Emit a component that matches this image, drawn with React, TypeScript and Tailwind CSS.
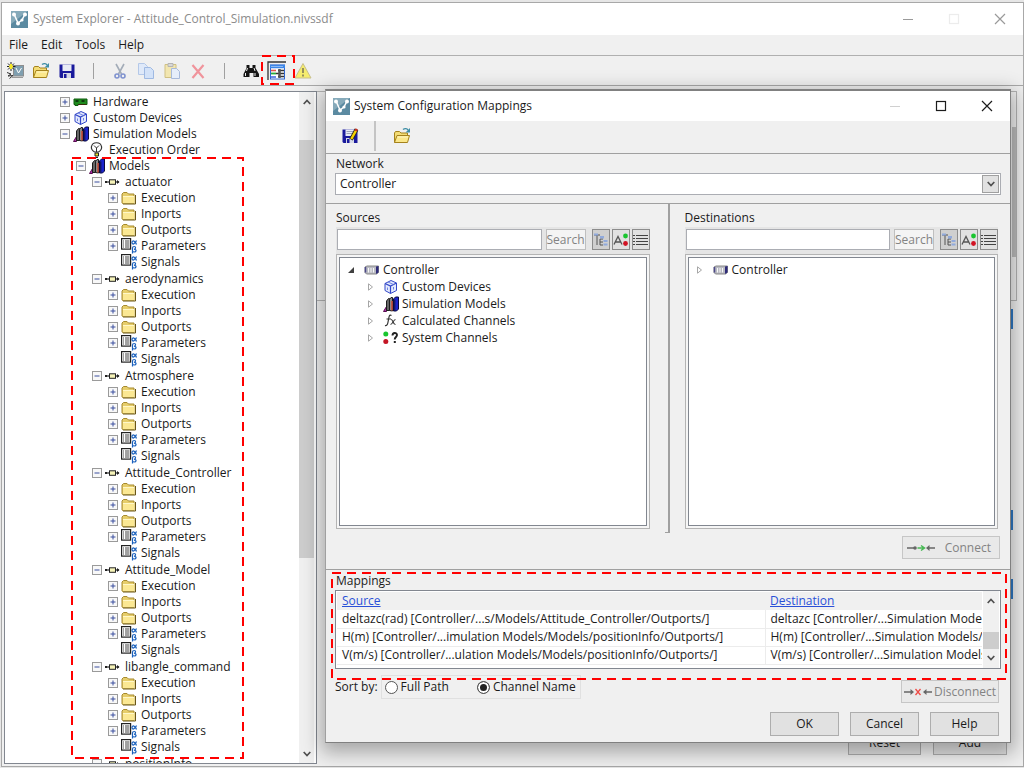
import React, { useState } from "react";
import clsx from "clsx";

type IconName =
  | "board"
  | "cube"
  | "books"
  | "bulb"
  | "block"
  | "folder"
  | "params"
  | "controller"
  | "fx"
  | "system";

type TreeItem = {
  label: string;
  icon: IconName;
  level: number;
  state?: "open" | "closed";
};

const topItems: TreeItem[] = [
  { label: "Hardware", icon: "board", level: 0, state: "closed" },
  { label: "Custom Devices", icon: "cube", level: 0, state: "closed" },
  { label: "Simulation Models", icon: "books", level: 0, state: "open" },
  { label: "Execution Order", icon: "bulb", level: 1 },
  { label: "Models", icon: "books", level: 1, state: "open" },
];

const models = [
  "actuator",
  "aerodynamics",
  "Atmosphere",
  "Attitude_Controller",
  "Attitude_Model",
  "libangle_command",
];

const modelChildren: TreeItem[] = [
  { label: "Execution", icon: "folder", level: 3, state: "closed" },
  { label: "Inports", icon: "folder", level: 3, state: "closed" },
  { label: "Outports", icon: "folder", level: 3, state: "closed" },
  { label: "Parameters", icon: "params", level: 3, state: "closed" },
  { label: "Signals", icon: "params", level: 3 },
];

const sourceItems: { label: string; icon: IconName }[] = [
  { label: "Custom Devices", icon: "cube" },
  { label: "Simulation Models", icon: "books" },
  { label: "Calculated Channels", icon: "fx" },
  { label: "System Channels", icon: "system" },
];

const mappings = [
  {
    source: "deltazc(rad) [Controller/...s/Models/Attitude_Controller/Outports/]",
    destination: "deltazc [Controller/...Simulation Models",
  },
  {
    source: "H(m) [Controller/...imulation Models/Models/positionInfo/Outports/]",
    destination: "H(m) [Controller/...Simulation Models/M",
  },
  {
    source: "V(m/s) [Controller/...ulation Models/Models/positionInfo/Outports/]",
    destination: "V(m/s) [Controller/...Simulation Models",
  },
];

const indent = ["pl-[55px]", "pl-[71px]", "pl-[87px]", "pl-[103px]"];

const AppLogo = () => (
  <svg viewBox="0 0 17 17" className="h-[17px] w-[17px] shrink-0">
    <rect width="17" height="17" fill="#5b8aa1" />
    <path d="M0 0h17L0 13z" fill="#86aaba" />
    <path d="M3 3l4 9M7 12l4-3 3-6" stroke="#fff" strokeWidth="1.5" fill="none" />
    <circle cx="3" cy="3.5" r="2" fill="#fff" />
    <circle cx="7" cy="12.5" r="2" fill="#fff" />
    <circle cx="11" cy="9" r="1.6" fill="#fff" />
    <circle cx="14" cy="3.5" r="2" fill="#fff" />
  </svg>
);

const OpenFolder = () => (
  <svg viewBox="0 0 18 18" className="h-[18px] w-[18px]">
    <path d="M1.5 15.500V6l1-1.500h4L8 6h6.500v3" fill="#f3dc75" stroke="#a5821c" />
    <path d="M1.500 15.500L4 8.500h12.500l-2 7z" fill="#fbe78a" stroke="#a5821c" strokeLinejoin="round" />
    <path d="M4.500 10h10.500" stroke="#fff6c4" />
    <path d="M10 2.500c2-1.500 4-1 5 .5" fill="none" stroke="#3f8ea6" strokeWidth="1.400" />
    <path d="M17 1v4.500h-4.500z" fill="#3f8ea6" />
  </svg>
);

const Floppy = ({ pencil = false }: { pencil?: boolean }) => (
  <svg viewBox="0 0 18 18" className="h-[18px] w-[18px]">
    <path d="M1.500 2.500h15v13.500h-14l-1-1z" fill="#1a1a9c" />
    <rect x="4.500" y="2.500" width="9" height="6.500" fill="#e9ecf5" />
    {pencil && <path d="M5.500 4.500h7M5.500 6.500h7" stroke="#9da3b8" />}
    <rect x="5" y="11" width="8" height="5" fill="#d5d8e6" />
    <rect x="6" y="12" width="2.500" height="4" fill="#1a1a9c" />
    {pencil && (
      <>
        <path d="M10 12.500l5.500-10" stroke="#222" strokeWidth="4" />
        <path d="M10.300 12l5-9" stroke="#f6d300" strokeWidth="2.500" />
        <path d="M14.600 3.800l1.200-2" stroke="#c8321e" strokeWidth="2.500" />
      </>
    )}
  </svg>
);

const TreeIcon = ({ name }: { name: IconName }) => {
  switch (name) {
    case "board":
      return (
        <svg viewBox="0 0 16 16" className="h-4 w-4 shrink-0">
          <path d="M1 5h13v5.500H5v1H2v-1H1z" fill="#1e8a1e" stroke="#0f5a0f" />
          <path d="M2.500 6h3v2h-3zM8.500 6h3v2h-3z" fill="#0d3a0d" />
          <path d="M5 10.500h8" stroke="#3a2c0c" />
        </svg>
      );
    case "cube":
      return (
        <svg viewBox="0 0 16 16" className="h-4 w-4 shrink-0">
          <path d="M2 4.500L8 1.500l5.500 2.500v7.500L7.500 14.500 2 11.500z" fill="#e4eafc" stroke="#3247c8" />
          <path d="M2 4.500l5.500 2.500 6-3M7.500 7v7.500" stroke="#3247c8" strokeWidth="1.200" fill="none" />
          <path d="M5 3l5.500 2.500M4.500 8.500v2.500M10.500 8v2.500" stroke="#6f84e6" />
        </svg>
      );
    case "books":
      return (
        <svg viewBox="0 0 16 16" className="h-4 w-4 shrink-0">
          <path d="M.5 15.500l3-5v5z" fill="#b32bb0" stroke="#57104f" />
          <path d="M3.500 14.500V5L5.500 2.500h1v12z" fill="#666" stroke="#1c1c1c" />
          <path d="M6.500 14.500V3.500L8 1.500h1.500V15z" fill="#8a8a8a" stroke="#1c1c1c" />
          <path d="M9 5v9.500" stroke="#c9503c" strokeWidth="1.600" />
          <path d="M10.500 15V3L12.500 1h3v12L13.500 15z" fill="#1a22cc" stroke="#0a0a40" />
          <path d="M11.800 3.500v11" stroke="#111" strokeWidth=".8" />
        </svg>
      );
    case "bulb":
      return (
        <svg viewBox="0 0 16 16" className="h-4 w-4 shrink-0">
          <path d="M5.500 10C3 8.500 2 6.500 2.500 4.500 3.500-.5 11.500-.5 12.500 4.500c.5 2-.5 4-3 5.500z" fill="#fff" stroke="#333" strokeWidth="1.200" />
          <path d="M5 3.500l2.500 2.500L10 3.500M7.500 6v4" stroke="#333" fill="none" />
          <path d="M6 11h3.500v3H6z" fill="#e8e22a" stroke="#222" />
          <path d="M6.500 15.500h2.500" stroke="#222" />
        </svg>
      );
    case "block":
      return (
        <svg viewBox="0 0 16 16" className="h-4 w-4 shrink-0">
          <path d="M1 8h13" stroke="#222" strokeWidth="1.200" />
          <path d="M12 6l2.500 2L12 10zM0 7h2v2H0z" fill="#222" />
          <rect x="4.500" y="5.800" width="6" height="4.500" fill="#f6f3b8" stroke="#222" />
        </svg>
      );
    case "folder":
      return (
        <svg viewBox="0 0 16 16" className="h-4 w-4 shrink-0">
          <path d="M1 13V4l1.500-1.500h3.500L7.500 4H13v9.500H1.500z" fill="#e6cd6a" stroke="#a68a2e" />
          <path d="M2 6h11.500v7.500H2z" fill="#fbe893" />
          <path d="M2 6.500h11" stroke="#fff7c8" />
          <path d="M14.500 5v9H2" stroke="#6b5716" fill="none" />
        </svg>
      );
    case "params":
      return (
        <svg viewBox="0 0 16 16" className="h-4 w-4 shrink-0 overflow-visible">
          <rect x=".6" y=".6" width="9" height="10.500" fill="#fff" stroke="#222" strokeWidth="1.200" />
          <path d="M2 3h1M2 5h1M2 7h1M2 9h1M4 3h4.500M4 5h4.500M4 7h4.500M4 9h4.500" stroke="#444" />
          <path d="M15.500 2.500c-1.500 4-4.500 4.500-4.500 2s3.500-2 4.500 2" fill="none" stroke="#1c62bd" strokeWidth="1.200" />
          <path d="M11.500 15.500V10c0-2 3.500-2 3 0 0 1-1 1.200-1.500 1.200 3 0 2.500 3 0 2.800l-1.200-.5" fill="none" stroke="#1c62bd" strokeWidth="1.200" />
        </svg>
      );
    case "controller":
      return (
        <svg viewBox="0 0 16 16" className="h-4 w-4 shrink-0">
          <path d="M1 5l2-1h11.500v6.500l-2 1.500H2.500L1 10.500z" fill="#b9bac2" stroke="#888" />
          <path d="M12 4.500l2.500-.5v6.500L12 12z" fill="#2e2b78" />
          <path d="M1.500 5v5.500" stroke="#4c498a" strokeWidth="1.500" />
          <path d="M4.500 6v4.500M7 6v4.500M9.500 6v4.500" stroke="#f7f7f7" />
        </svg>
      );
    case "fx":
      return (
        <svg viewBox="0 0 16 16" className="h-4 w-4 shrink-0">
          <path d="M8.500 2.500C6.500 1 6 3.500 5.500 6.500S4.500 13.500 2 12.500M3.500 6h4.500" fill="none" stroke="#333" strokeWidth="1.200" />
          <path d="M8 6.500c2-.5 2 5.500 4.500 5M12.500 6.500c-2 0-3 5-5 5" fill="none" stroke="#333" strokeWidth="1.100" />
        </svg>
      );
    case "system":
      return (
        <svg viewBox="0 0 16 16" className="h-4 w-4 shrink-0">
          <circle cx="2.800" cy="4" r="2.500" fill="#19c52e" />
          <circle cx="2.800" cy="11.500" r="2.500" fill="#c41525" />
          <path d="M9.500 5.500c0-3.200 4.500-3.200 4.500-.5 0 2-2.300 2-2.300 4.500" fill="none" stroke="#222" strokeWidth="1.900" />
          <rect x="10.800" y="11" width="2" height="2" fill="#222" />
        </svg>
      );
  }
};

const Chevron = ({ up = false }: { up?: boolean }) => (
  <svg viewBox="0 0 8 6" className="h-[6px] w-2">
    <path d={up ? "M.7 5L4 1.500 7.300 5" : "M.7 1L4 4.500 7.300 1"} fill="none" stroke="#505050" strokeWidth="1.700" />
  </svg>
);

// red dashed callout drawn over whatever it wraps
const DashedFrame = ({ className }: { className: string }) => (
  <div className={clsx("pointer-events-none absolute z-20", className)}>
    <svg className="block h-full w-full overflow-visible">
      <rect width="100%" height="100%" fill="none" stroke="#ff0000" strokeWidth="2" strokeDasharray="9 6" />
    </svg>
  </div>
);

const TreeRow = ({ label, icon, level, state }: TreeItem) => (
  <li className={clsx("flex h-4 items-center whitespace-nowrap", indent[level])}>
    {state ? (
      <button
        type="button"
        aria-label={`Toggle ${label}`}
        className="mr-[3px] h-[10px] w-[10px] shrink-0 border border-[#9a9a9a] bg-[#f8f8f8]"
      >
        <svg viewBox="0 0 8 8" className="h-2 w-2">
          <path d={state === "open" ? "M1.500 4h5" : "M1.500 4h5M4 1.500v5"} stroke="#3a4f9e" />
        </svg>
      </button>
    ) : (
      <span className="mr-[3px] w-[10px] shrink-0" />
    )}
    <TreeIcon name={icon} />
    <span className="ml-1">{label}</span>
  </li>
);

const toolButton = "flex h-6 w-[26px] items-center justify-center";

const ToolSeparator = () => (
  <span className="flex w-[27px] justify-center">
    <span className="h-4 w-px bg-[#a0a0a0]" />
  </span>
);

const MainToolbar = () => (
  <div className="relative flex h-[30px] items-center border-t border-[#b0b0b0] bg-[#f0f0f0] pt-px">
    <button type="button" aria-label="New" className={toolButton}>
      <svg viewBox="0 0 18 18" className="h-[18px] w-[18px]">
        <rect x="7.500" y="3.500" width="10" height="10.500" fill="#7f9fb0" stroke="#8d8d8d" />
        <path d="M10 6l2.500 5 3-5" stroke="#fff" fill="none" />
        <path d="M5 0v9M1 4.500h8.500M2 1.500l6 6M8 1.500l-6 6" stroke="#222" />
        <path d="M5 2v5M3 4.500h4" stroke="#f6e926" strokeWidth="2" />
        <path d="M1 10.500l4 1.500-3 2 5-.5-3.500 3" stroke="#333" fill="none" />
        <path d="M6 15.500h11" stroke="#999" />
      </svg>
    </button>
    <button type="button" aria-label="Open" className={toolButton}>
      <OpenFolder />
    </button>
    <button type="button" aria-label="Save" className={toolButton}>
      <Floppy />
    </button>
    <ToolSeparator />
    <button type="button" aria-label="Cut" className={toolButton}>
      <svg viewBox="0 0 18 18" className="h-[18px] w-[18px]">
        <path d="M5 2l5.500 10M13 2L7.500 12" stroke="#a3acb8" strokeWidth="1.600" />
        <circle cx="6" cy="14" r="2" fill="none" stroke="#8093cf" strokeWidth="1.600" />
        <circle cx="12" cy="14" r="2" fill="none" stroke="#8093cf" strokeWidth="1.600" />
      </svg>
    </button>
    <button type="button" aria-label="Copy" className={toolButton}>
      <svg viewBox="0 0 18 18" className="h-[18px] w-[18px]">
        <path d="M1.500 1.500h6l3 3v8h-9z" fill="#dfe9f9" stroke="#b4c8e8" />
        <path d="M7.500 5.500h6l3 3v8h-9z" fill="#d3e2f8" stroke="#9fb9e2" />
      </svg>
    </button>
    <button type="button" aria-label="Paste" className={toolButton}>
      <svg viewBox="0 0 18 18" className="h-[18px] w-[18px]">
        <path d="M2 2.500h11v13H2z" fill="#f2e6b0" stroke="#d0c083" />
        <path d="M5 1.500h5v3H5z" fill="#d9d9d9" stroke="#b4b4b4" />
        <path d="M8.500 6.500h5l3 3v7h-8z" fill="#e6eefa" stroke="#a8bada" />
      </svg>
    </button>
    <button type="button" aria-label="Delete" className={toolButton}>
      <svg viewBox="0 0 18 18" className="h-[18px] w-[18px]">
        <path d="M3.500 3l11 13M14.500 3L3.500 16" stroke="#f0949c" strokeWidth="2.200" />
      </svg>
    </button>
    <ToolSeparator />
    <button type="button" aria-label="Find" className={toolButton}>
      <svg viewBox="0 0 18 18" className="h-[18px] w-[18px]">
        <path d="M4.500 3h3v3h3V3h3v3l3.500 6v3h-5.500v-4h-4v4H1.500v-3L4.500 6z" fill="#161616" />
        <path d="M3.500 11v3M5.500 6l-1 3M13 11v3M12 6l1 3" stroke="#eee" />
      </svg>
    </button>
    <button type="button" aria-label="Configure mappings" className={toolButton}>
      <svg viewBox="0 0 20 20" className="h-5 w-5">
        <path d="M1 19V1h18" stroke="#333" fill="none" strokeWidth="1.300" />
        <rect x="3.500" y="4" width="14" height="14" fill="#fff" stroke="#2f66d0" />
        <path d="M3 5.500h15" stroke="#3c86e8" strokeWidth="3.500" />
        <path d="M4.500 5.500h12" stroke="#dceafc" strokeDasharray="1 1" />
        <path d="M4 9.500h5" stroke="#e0554b" strokeWidth="1.600" />
        <path d="M4 12.500h5" stroke="#2aa83c" strokeWidth="1.800" />
        <path d="M4 16h5" stroke="#4a6be0" strokeWidth="1.600" />
        <path d="M11 9.500h6M9 12.500h8M11 15.500h6" stroke="#333" strokeWidth="1.300" />
        <path d="M12.500 8v9" stroke="#555" strokeWidth="2.500" />
      </svg>
    </button>
    <button type="button" aria-label="Errors and warnings" className={toolButton}>
      <svg viewBox="0 0 18 18" className="h-[18px] w-[18px]">
        <path d="M9 1.500L17 16H1z" fill="#f5ec6e" stroke="#c8c08c" strokeLinejoin="round" />
        <path d="M9 6v5M9 12.500v2" stroke="#85815c" strokeWidth="1.700" />
      </svg>
    </button>
    <DashedFrame className="left-[260px] top-0 h-[28px] w-[32px]" />
  </div>
);

const WindowButtons = ({ dialog = false }: { dialog?: boolean }) => (
  <div className={clsx("flex", dialog ? "text-[#1c1c1c]" : "text-[#9a9a9a]")}>
    <button type="button" aria-label="Minimize" className="flex h-[30px] w-[46px] items-center justify-center">
      <svg viewBox="0 0 12 12" className={clsx("h-3 w-3", dialog && "text-[#d0d0d0]")}>
        <path d="M1 6.500h10" stroke="currentColor" />
      </svg>
    </button>
    <button type="button" aria-label="Maximize" className="flex h-[30px] w-[46px] items-center justify-center">
      <svg viewBox="0 0 12 12" className={clsx("h-3 w-3", !dialog && "text-[#ececec]")}>
        <rect x="1.500" y="1.500" width="9" height="9" fill="none" stroke="currentColor" strokeWidth="1.200" />
      </svg>
    </button>
    <button type="button" aria-label="Close" className="flex h-[30px] w-[46px] items-center justify-center">
      <svg viewBox="0 0 12 12" className="h-3 w-3">
        <path d="M1 1l10 10M11 1L1 11" stroke="currentColor" strokeWidth="1.200" />
      </svg>
    </button>
  </div>
);

const ExplorerTree = () => (
  <div className="relative flex w-[313px] shrink-0 border border-[#828790] bg-white">
    <ul className="min-w-0 flex-1 overflow-hidden pt-0.5">
      {topItems.map((item) => (
        <TreeRow key={item.label} {...item} />
      ))}
      {models.map((model) => (
        <li key={model}>
          <ul className="pb-px">
            <TreeRow label={model} icon="block" level={2} state="open" />
            {modelChildren.map((item) => (
              <TreeRow key={item.label} {...item} />
            ))}
          </ul>
        </li>
      ))}
      <TreeRow label="positionInfo" icon="block" level={2} state="open" />
    </ul>
    <div className="mr-0.5 flex w-[15px] flex-col items-center bg-[#f0f0f0]">
      <div className="flex h-5 items-center">
        <Chevron up />
      </div>
      <div className="mt-[28px] h-[418px] w-full bg-[#cdcdcd]" />
      <div className="mt-auto flex h-[18px] items-center">
        <Chevron />
      </div>
    </div>
    <DashedFrame className="bottom-[5px] left-[67px] top-[66px] w-[171px]" />
  </div>
);

const Triangle = ({ open = false }: { open?: boolean }) => (
  <svg viewBox="0 0 8 8" className="h-2 w-2 shrink-0">
    {open ? (
      <path d="M7 1v6H1z" fill="#404040" />
    ) : (
      <path d="M1.500.8L5.500 4 1.500 7.200z" fill="#fff" stroke="#a6a6a6" />
    )}
  </svg>
);

const viewButton = "flex h-[21px] w-[18px] items-center justify-center border border-[#8c8c8c]";

type ChannelPaneProps = {
  title: string;
  expanded?: boolean;
};

const ChannelPane = ({ title, expanded = false }: ChannelPaneProps) => {
  const [query, setQuery] = useState("");

  return (
    <section className="flex min-w-0 flex-1 flex-col">
      <label htmlFor={title} className="h-[23px] leading-[28px]">
        {title}
      </label>
      <div className="flex h-[27px] items-start bg-[#e5e5e5] pl-px pt-0.5">
        <input
          id={title}
          type="text"
          value={query}
          onChange={(e) => setQuery(e.target.value)}
          className="h-[21px] min-w-0 flex-1 border border-[#abadb3] bg-white px-1 outline-none"
        />
        <button type="button" disabled className="ml-1 h-[21px] w-10 border border-[#bfbfbf] bg-[#f4f4f4] text-center text-[#838383]">
          Search
        </button>
        <button type="button" aria-label={`${title} tree view`} className={clsx(viewButton, "ml-[6px] bg-[#cfcfcf]")}>
          <svg viewBox="0 0 16 16" className="h-4 w-4">
            <path d="M1 3h6M4 3v10M7 7v6M7 7h3M7 10h3M7 13h3" stroke="#555" />
            <path d="M1 1.500h4v2H1zM7 4h4v2.500H7zM10.500 8h4v2h-4zM10.500 11.500h4v2h-4z" fill="#90a9dc" />
          </svg>
        </button>
        <button type="button" aria-label={`${title} sort by name`} className={clsx(viewButton, "ml-[2px] bg-[#e1e1e1]")}>
          <svg viewBox="0 0 16 16" className="h-4 w-4">
            <path d="M1 12.500L5 4.500l4 8M2.500 10h5" fill="none" stroke="#555" strokeWidth="1.300" />
            <circle cx="12.500" cy="4" r="2.400" fill="#19c52e" />
            <circle cx="12.500" cy="11.500" r="2.400" fill="#d11223" />
          </svg>
        </button>
        <button type="button" aria-label={`${title} list view`} className={clsx(viewButton, "ml-[2px] bg-[#e1e1e1]")}>
          <svg viewBox="0 0 16 16" className="h-4 w-4">
            <path d="M3 3.500h12M3 6.500h12M3 9.500h12M3 12.500h12" stroke="#444" />
            <path d="M0 3.500h2M0 6.500h2M0 9.500h2M0 12.500h2" stroke="#444" />
          </svg>
        </button>
      </div>
      <div className="h-[275px] border border-[#b4b4b4] bg-[#f6f6f6] p-0.5">
        <ul className="h-full border border-[#828790] bg-white pt-[3px]">
          <li>
            <div className="flex h-[17px] items-center pl-[7px]">
              <Triangle open={expanded} />
              <span className="ml-[9px] flex items-center">
                <TreeIcon name="controller" />
                <span className="ml-[3px]">Controller</span>
              </span>
            </div>
            {expanded && (
              <ul>
                {sourceItems.map(({ label, icon }) => (
                  <li key={label} className="flex h-[17px] items-center pl-[27px]">
                    <Triangle />
                    <span className="ml-2 flex items-center">
                      <TreeIcon name={icon} />
                      <span className="ml-[3px]">{label}</span>
                    </span>
                  </li>
                ))}
              </ul>
            )}
          </li>
        </ul>
      </div>
    </section>
  );
};

const disabledButton = "flex h-[23px] w-[98px] items-center justify-between border border-[#c6c6c6] bg-[#e9e9e9] text-[#838383]";
const dialogButton = "h-6 w-[69px] border border-[#adadad] bg-[#e1e1e1] text-center";

const MappingsTable = () => (
  <div className="flex h-[79px] border border-[#828790] bg-white">
    <div className="min-w-0 flex-1 overflow-hidden p-px">
      <table className="w-full table-fixed border-collapse">
        <thead className="bg-[#f0f0f0]">
          <tr className="h-[18px] text-left">
            <th className="w-[428px] p-0 pl-[5px] font-normal">
              <a href="#source" className="text-[#2a50d8] underline">
                Source
              </a>
            </th>
            <th className="p-0 pl-[5px] font-normal">
              <a href="#destination" className="text-[#2a50d8] underline">
                Destination
              </a>
            </th>
          </tr>
        </thead>
        <tbody>
          {mappings.map((row) => (
            <tr key={row.source} className="h-[18px] border-b border-[#ececec]">
              <td className="overflow-hidden whitespace-nowrap p-0 pl-[5px]">{row.source}</td>
              <td className="overflow-hidden whitespace-nowrap border-l border-[#ececec] p-0 pl-[5px]">
                {row.destination}
              </td>
            </tr>
          ))}
        </tbody>
      </table>
    </div>
    <div className="mr-px flex w-[16px] flex-col items-center bg-[#f0f0f0]">
      <div className="flex h-5 items-center">
        <Chevron up />
      </div>
      <div className="mt-[21px] h-[17px] w-full bg-[#cdcdcd]" />
      <div className="flex h-[18px] items-center">
        <Chevron />
      </div>
    </div>
  </div>
);

const radioClass =
  "h-[13px] w-[13px] appearance-none rounded-full border border-[#555] bg-white checked:bg-[#222] checked:shadow-[inset_0_0_0_2px_white]";

const MappingsDialog = () => {
  const [network, setNetwork] = useState("Controller");
  const [sortBy, setSortBy] = useState("channel");

  return (
    <div
      role="dialog"
      aria-label="System Configuration Mappings"
      className="absolute left-[325px] right-[13px] top-[89px] z-10 border border-t-2 border-[#808080] border-l-[#a0a0a0] bg-[#f0f0f0] shadow-[0_6px_18px_4px_rgba(0,0,0,0.3)]"
    >
      <div className="flex h-[30px] items-center bg-white pl-[7px]">
        <AppLogo />
        <h2 className="ml-1 flex-1">System Configuration Mappings</h2>
        <WindowButtons dialog />
      </div>

      <div className="flex h-[33px] items-start border-b border-[#a0a0a0]">
        <button type="button" aria-label="Save mappings" className="flex h-[30px] w-12 items-center justify-center">
          <Floppy pencil />
        </button>
        <span className="h-[30px] w-0.5 bg-[#c4c4c4]" />
        <button type="button" aria-label="Import mappings" className="flex h-[30px] w-[52px] items-center justify-center">
          <OpenFolder />
        </button>
      </div>

      <div className="border-b border-[#a0a0a0] px-[9px] pb-2">
        <label htmlFor="network" className="block h-[19px] pl-px leading-[20px]">
          Network
        </label>
        <div className="relative">
          <select
            id="network"
            value={network}
            onChange={(e) => setNetwork(e.target.value)}
            className="block h-[22px] w-full appearance-none border border-[#abadb3] bg-white pl-1 outline-none"
          >
            <option>Controller</option>
          </select>
          <span className="pointer-events-none absolute inset-y-0.5 right-0.5 flex w-[17px] items-center justify-center border border-[#a0a0a0] bg-[#e1e1e1]">
            <Chevron />
          </span>
        </div>
      </div>

      <div className="flex pl-[10px] pr-3">
        <ChannelPane title="Sources" expanded />
        <div className="flex h-[329px] w-[35px] justify-center">
          <div className="w-[5px] border-b border-r-2 border-[#a0a0a0]" />
        </div>
        <ChannelPane title="Destinations" />
      </div>

      <div className="flex h-[37px] items-start justify-end border-b border-[#a0a0a0] pr-[10px] pt-[3px]">
        <button type="button" disabled className={clsx(disabledButton, "pl-1 pr-2")}>
          <svg viewBox="0 0 28 8" className="h-2 w-7">
            <path d="M0 4h7M21 4h7" stroke="#666" strokeWidth="1.500" />
            <circle cx="8" cy="4" r="1.800" fill="#666" />
            <path d="M19 4l3.500-3v6z" fill="#666" />
            <path d="M10.500 4h6M14 1.500L17.500 4 14 6.500" stroke="#48b954" strokeWidth="1.500" fill="none" />
          </svg>
          Connect
        </button>
      </div>

      <section className="relative px-[9px] pb-[6px]">
        <h3 className="h-5 pl-px leading-[22px]">Mappings</h3>
        <MappingsTable />
        <DashedFrame className="left-[6px] right-[4px] top-[3px] h-[106px]" />
        <div className="mt-[6px] flex items-start justify-between pr-0.5">
          <div role="radiogroup" aria-label="Sort order" className="flex items-center">
            <span className="mr-[3px]">Sort by:</span>
            <div className="flex h-6 items-center border border-[#e0e0e0] pl-[3px] pr-1">
              <input
                id="sort-path"
                type="radio"
                name="sort"
                checked={sortBy === "path"}
                onChange={() => setSortBy("path")}
                className={radioClass}
              />
              <label htmlFor="sort-path" className="ml-[3px] mr-7">
                Full Path
              </label>
              <input
                id="sort-channel"
                type="radio"
                name="sort"
                checked={sortBy === "channel"}
                onChange={() => setSortBy("channel")}
                className={radioClass}
              />
              <label htmlFor="sort-channel" className="ml-[3px]">
                Channel Name
              </label>
            </div>
          </div>
          <button type="button" disabled className={clsx(disabledButton, "mt-[5px] px-0.5")}>
            <svg viewBox="0 0 28 8" className="h-2 w-7">
              <path d="M0 4h7M21 4h7" stroke="#666" strokeWidth="1.500" />
              <path d="M10 4L6.500 1v6zM19 4l3.500-3v6z" fill="#666" />
              <path d="M11.500 1l5 6M16.500 1l-5 6" stroke="#ee4a44" strokeWidth="1.300" />
            </svg>
            Disconnect
          </button>
        </div>
        <div className="mt-[9px] flex justify-end gap-[11px] pr-0.5">
          <button type="button" className={dialogButton}>
            OK
          </button>
          <button type="button" className={dialogButton}>
            Cancel
          </button>
          <button type="button" className={dialogButton}>
            Help
          </button>
        </div>
      </section>
    </div>
  );
};

const App = () => {
  return (
    <div className="relative flex h-screen flex-col overflow-hidden bg-[#e6e6e6] pb-px pl-px pt-0.5 font-['Open_Sans',sans-serif] text-[12px] leading-4 text-[#1a1a1a]">
      <div className="flex min-h-0 flex-1 flex-col border border-[#a8a8a8] bg-[#f0f0f0]">
        <div className="flex h-8 shrink-0 items-center bg-white pl-[9px] text-[#8c8c8c]">
          <AppLogo />
          <h1 className="ml-[5px] flex-1">System Explorer - Attitude_Control_Simulation.nivssdf</h1>
          <WindowButtons />
        </div>
        <nav className="flex h-5 shrink-0 items-center gap-[13px] pl-[7px]">
          <button type="button">File</button>
          <button type="button">Edit</button>
          <button type="button">Tools</button>
          <button type="button">Help</button>
        </nav>
        <MainToolbar />
        <div className="flex min-h-0 flex-1 border-t border-[#a8a8a8] pb-0.5 pl-0.5 pt-[5px]">
          <ExplorerTree />
          <div className="flex min-w-0 flex-1 flex-col items-end">
            <div className="mr-[6px] flex h-[210px] w-full justify-end border border-[#b4b4b4]">
              <div className="mt-[35px] h-[130px] w-1 bg-[#bdbdbd]" />
            </div>
            <div className="mr-[10px] mt-2 h-5 w-20 bg-[#2f78c4]" />
            <div className="mr-[10px] mt-[181px] h-5 w-20 bg-[#2f78c4]" />
            <div className="mr-[10px] mt-[49px] h-5 w-20 bg-[#2f78c4]" />
            <div className="mb-[9px] mr-4 mt-auto flex gap-3">
              <button type="button" className="h-6 w-[73px] border border-[#adadad] bg-[#e1e1e1] text-center">
                Reset
              </button>
              <button type="button" className="h-6 w-[74px] border border-[#adadad] bg-[#e1e1e1] text-center">
                Add
              </button>
            </div>
          </div>
        </div>
      </div>
      <MappingsDialog />
    </div>
  );
};

export default App;
